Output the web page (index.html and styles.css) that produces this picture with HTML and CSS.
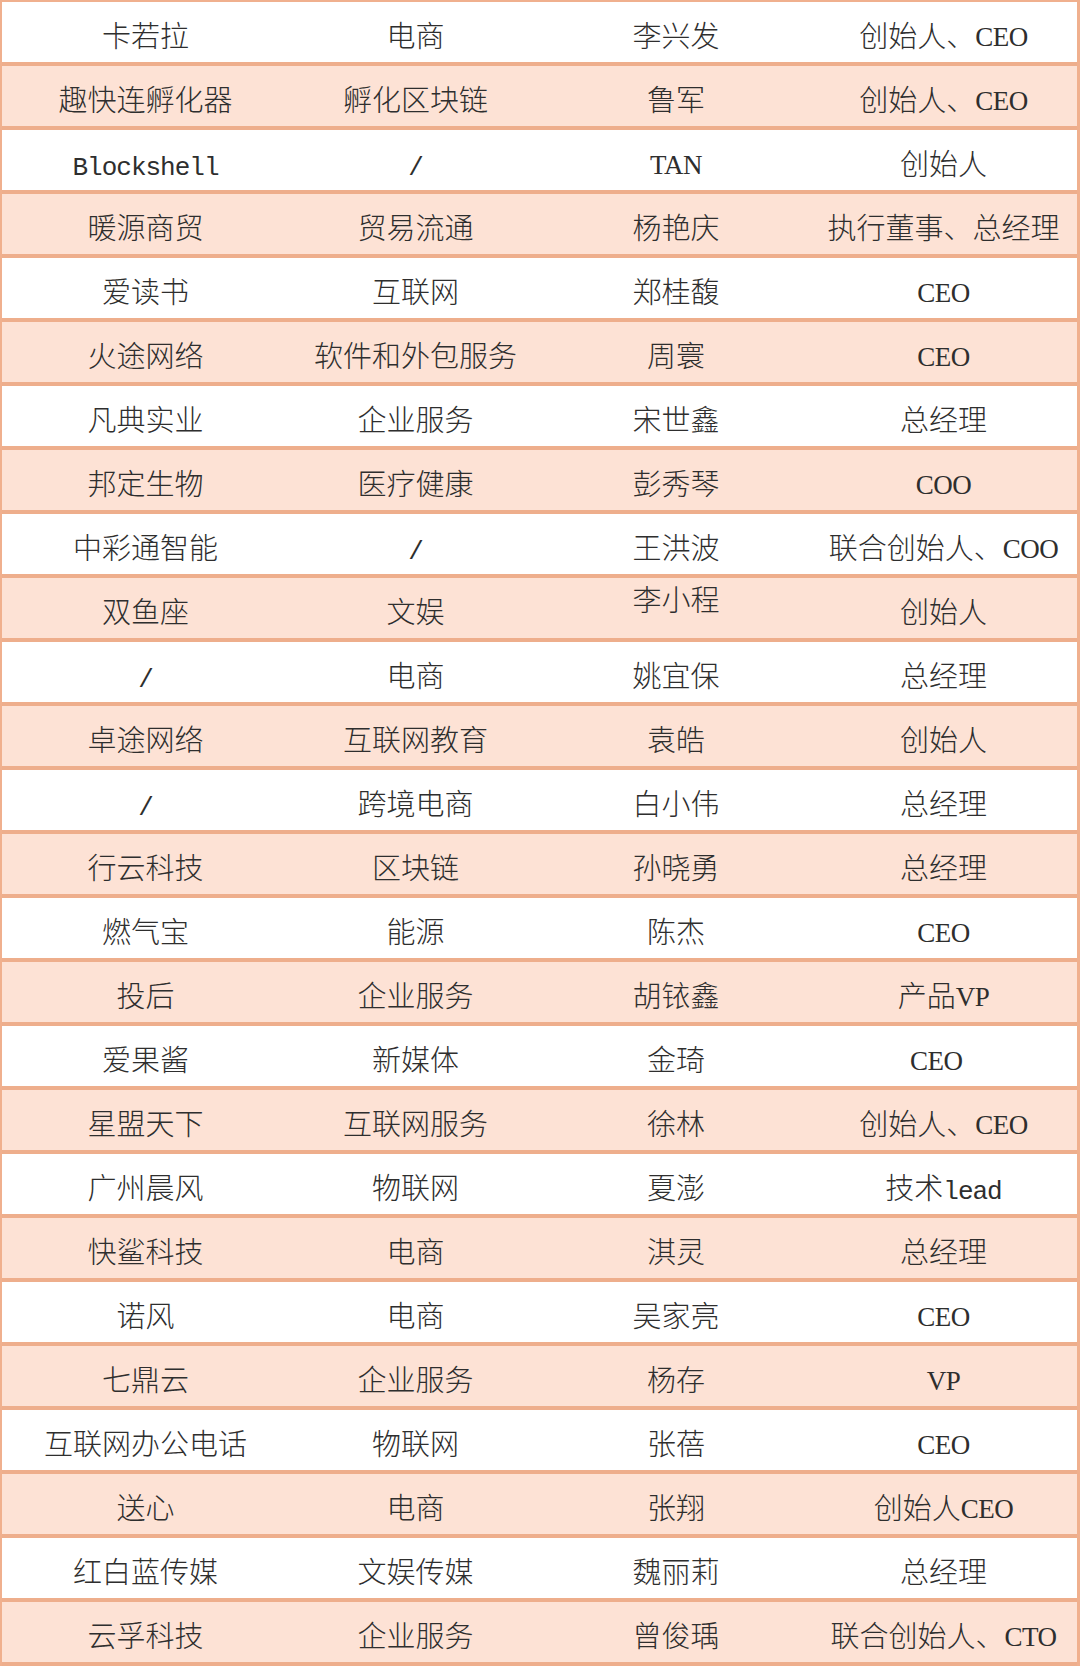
FILE: index.html
```html
<!DOCTYPE html>
<html lang="zh-CN">
<head>
<meta charset="utf-8">
<title>表格</title>
<link rel="stylesheet" href="styles.css">
</head>
<body>
<div class="table">
  <div class="row"><div class="cell">卡若拉</div><div class="cell">电商</div><div class="cell">李兴发</div><div class="cell">创始人、<span class="lat">CEO</span></div></div>
  <div class="row alt"><div class="cell">趣快连孵化器</div><div class="cell">孵化区块链</div><div class="cell">鲁军</div><div class="cell">创始人、<span class="lat">CEO</span></div></div>
  <div class="row"><div class="cell"><span class="mono">Blockshell</span></div><div class="cell"><span class="mono">/</span></div><div class="cell"><span class="lat">TAN</span></div><div class="cell">创始人</div></div>
  <div class="row alt"><div class="cell">暖源商贸</div><div class="cell">贸易流通</div><div class="cell">杨艳庆</div><div class="cell">执行董事、总经理</div></div>
  <div class="row"><div class="cell">爱读书</div><div class="cell">互联网</div><div class="cell">郑桂馥</div><div class="cell"><span class="lat">CEO</span></div></div>
  <div class="row alt"><div class="cell">火途网络</div><div class="cell">软件和外包服务</div><div class="cell">周寰</div><div class="cell"><span class="lat">CEO</span></div></div>
  <div class="row"><div class="cell">凡典实业</div><div class="cell">企业服务</div><div class="cell">宋世鑫</div><div class="cell">总经理</div></div>
  <div class="row alt"><div class="cell">邦定生物</div><div class="cell">医疗健康</div><div class="cell">彭秀琴</div><div class="cell"><span class="lat">COO</span></div></div>
  <div class="row"><div class="cell">中彩通智能</div><div class="cell"><span class="mono">/</span></div><div class="cell">王洪波</div><div class="cell">联合创始人、<span class="lat">COO</span></div></div>
  <div class="row alt"><div class="cell">双鱼座</div><div class="cell">文娱</div><div class="cell top">李小程</div><div class="cell">创始人</div></div>
  <div class="row"><div class="cell"><span class="mono">/</span></div><div class="cell">电商</div><div class="cell">姚宜保</div><div class="cell">总经理</div></div>
  <div class="row alt"><div class="cell">卓途网络</div><div class="cell">互联网教育</div><div class="cell">袁皓</div><div class="cell">创始人</div></div>
  <div class="row"><div class="cell"><span class="mono">/</span></div><div class="cell">跨境电商</div><div class="cell">白小伟</div><div class="cell">总经理</div></div>
  <div class="row alt"><div class="cell">行云科技</div><div class="cell">区块链</div><div class="cell">孙晓勇</div><div class="cell">总经理</div></div>
  <div class="row"><div class="cell">燃气宝</div><div class="cell">能源</div><div class="cell">陈杰</div><div class="cell"><span class="lat">CEO</span></div></div>
  <div class="row alt"><div class="cell">投后</div><div class="cell">企业服务</div><div class="cell">胡铱鑫</div><div class="cell">产品<span class="lat">VP</span></div></div>
  <div class="row"><div class="cell">爱果酱</div><div class="cell">新媒体</div><div class="cell">金琦</div><div class="cell"><span class="lat">CEO</span><span class="mono">&nbsp;</span></div></div>
  <div class="row alt"><div class="cell">星盟天下</div><div class="cell">互联网服务</div><div class="cell">徐林</div><div class="cell">创始人、<span class="lat">CEO</span></div></div>
  <div class="row"><div class="cell">广州晨风</div><div class="cell">物联网</div><div class="cell">夏澎</div><div class="cell">技术<span class="mono">lead</span></div></div>
  <div class="row alt"><div class="cell">快鲨科技</div><div class="cell">电商</div><div class="cell">淇灵</div><div class="cell">总经理</div></div>
  <div class="row"><div class="cell">诺风</div><div class="cell">电商</div><div class="cell">吴家亮</div><div class="cell"><span class="lat">CEO</span></div></div>
  <div class="row alt"><div class="cell">七鼎云</div><div class="cell">企业服务</div><div class="cell">杨存</div><div class="cell"><span class="lat">VP</span></div></div>
  <div class="row"><div class="cell">互联网办公电话</div><div class="cell">物联网</div><div class="cell">张蓓</div><div class="cell"><span class="lat">CEO</span></div></div>
  <div class="row alt"><div class="cell">送心</div><div class="cell">电商</div><div class="cell">张翔</div><div class="cell">创始人<span class="lat">CEO</span></div></div>
  <div class="row"><div class="cell">红白蓝传媒</div><div class="cell">文娱传媒</div><div class="cell">魏丽莉</div><div class="cell">总经理</div></div>
  <div class="row alt"><div class="cell">云孚科技</div><div class="cell">企业服务</div><div class="cell">曾俊瑀</div><div class="cell">联合创始人、<span class="lat">CTO</span></div></div>
</div>
</body>
</html>
```

FILE: styles.css
```css
html, body {
  margin: 0;
  padding: 0;
  background: #ffffff;
}

.table {
  width: 1080px;
  box-sizing: border-box;
  border-top: 2px solid #f0b08e;
  border-left: 2px solid #f0b08e;
  border-right: 3px solid #f0b08e;
  font-family: "Noto Sans CJK SC", "Noto Sans CJK JP", sans-serif;
  font-size: 29px;
  font-weight: 300;
  color: #2e2e2e;
}

.row {
  display: grid;
  grid-template-columns: 287px 253px 268px 267px;
  height: 60px;
  border-bottom: 4px solid #eeae8c;
  background: #ffffff;
}

.row.alt {
  background: #fde2d5;
}

.cell {
  box-sizing: border-box;
  height: 60px;
  padding-top: 4px;
  line-height: 56px;
  text-align: center;
  white-space: nowrap;
}

.cell.top {
  padding-top: 0;
  line-height: 40px;
}

.mono {
  font-family: "Liberation Mono", monospace;
  font-size: 26px;
  font-weight: 400;
  letter-spacing: -1px;
}

.lat {
  font-family: "Liberation Serif", serif;
  font-size: 27px;
  font-weight: 400;
  letter-spacing: -0.5px;
  vertical-align: 1px;
}
```
